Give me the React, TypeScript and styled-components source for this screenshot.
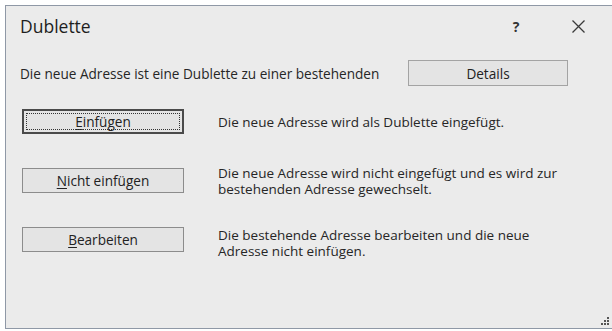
import React from "react";
import styled, { createGlobalStyle } from "styled-components";

const GlobalStyle = createGlobalStyle`
  html, body {
    margin: 0;
    padding: 0;
    background: #ffffff;
  }
  body {
    font-family: "Open Sans", "Noto Sans", "DejaVu Sans", sans-serif;
    color: #262626;
  }
`;

const options = [
  {
    label: "Einfügen",
    key: "E",
    rest: "infügen",
    text: "Die neue Adresse wird als Dublette eingefügt.",
    isDefault: true,
    shift: 0,
  },
  {
    label: "Nicht einfügen",
    key: "N",
    rest: "icht einfügen",
    text: "Die neue Adresse wird nicht eingefügt und es wird zur bestehenden Adresse gewechselt.",
    shift: 1,
  },
  {
    label: "Bearbeiten",
    key: "B",
    rest: "earbeiten",
    text: "Die bestehende Adresse bearbeiten und die neue Adresse nicht einfügen.",
    shift: 7,
  },
];

const App = () => {
  return (
    <>
      <GlobalStyle />
      <Window>
        <TitleBar>
          <Title>Dublette</Title>
          <HelpButton>?</HelpButton>
          <CloseButton aria-label="Schließen">
            <svg width="13" height="13" viewBox="0 0 13 13">
              <path d="M0.5 0.5 L12.5 12.5 M12.5 0.5 L0.5 12.5" stroke="#3a3a3a" strokeWidth="1.3" fill="none" />
            </svg>
          </CloseButton>
        </TitleBar>
        <InfoRow>
          <InfoText>Die neue Adresse ist eine Dublette zu einer bestehenden</InfoText>
          <DetailsButton>Details</DetailsButton>
        </InfoRow>
        <OptionList>
          {options.map((o) => (
            <OptionRow key={o.label}>
              <ActionButton $default={!!o.isDefault}>
                <Caption $focused={!!o.isDefault}>
                  <u>{o.key}</u>
                  {o.rest}
                </Caption>
              </ActionButton>
              <Description $shift={o.shift}>{o.text}</Description>
            </OptionRow>
          ))}
        </OptionList>
        <Grip>
          <svg width="8" height="8" viewBox="0 0 8 8">
            <rect x="6" y="0" width="2" height="2" fill="#555" />
            <rect x="3" y="3" width="2" height="2" fill="#555" />
            <rect x="6" y="3" width="2" height="2" fill="#555" />
            <rect x="0" y="6" width="2" height="2" fill="#555" />
            <rect x="3" y="6" width="2" height="2" fill="#555" />
            <rect x="6" y="6" width="2" height="2" fill="#555" />
          </svg>
        </Grip>
      </Window>
    </>
  );
};

export default App;

const Window = styled.div`
  position: relative;
  box-sizing: border-box;
  margin: 5px 0 0 5px;
  width: 607px;
  height: 324px;
  background: #ebebeb;
  border: 1px solid #8f98a6;
  border-right: none;
  display: flex;
  flex-direction: column;
`;

const TitleBar = styled.div`
  display: flex;
  align-items: center;
  height: 40px;
  padding-left: 14px;
`;

const Title = styled.span`
  font-size: 17.5px;
  color: #1e1e1e;
  flex: 1;
`;

const HelpButton = styled.span`
  font-size: 14px;
  font-weight: 700;
  color: #333;
  width: 20px;
  text-align: center;
  margin-right: 46px;
`;

const CloseButton = styled.span`
  display: flex;
  width: 13px;
  height: 13px;
  margin-right: 27px;
`;

const InfoRow = styled.div`
  display: flex;
  align-items: center;
  margin-top: 14px;
  padding-left: 14px;
  height: 26px;
`;

const InfoText = styled.span`
  font-size: 13.6px;
  flex: 1;
`;

const BaseButton = styled.div`
  box-sizing: border-box;
  display: flex;
  align-items: center;
  justify-content: center;
  height: 26px;
  background: #e4e4e4;
  border: 1px solid #a3a3a3;
  font-size: 13.6px;
  color: #222;
`;

const DetailsButton = styled(BaseButton)`
  width: 160px;
  margin-right: 44px;
`;

const OptionList = styled.div`
  display: flex;
  flex-direction: column;
  gap: 34px;
  padding: 23px 0 0 16px;
`;

const OptionRow = styled.div`
  display: flex;
  align-items: center;
  height: 25px;
  gap: 34px;
`;

const ActionButton = styled(BaseButton)<{ $default: boolean }>`
  flex: none;
  width: 162px;
  height: 25px;
  border: ${(p) => (p.$default ? "2px solid #4a4a4a" : "1px solid #8c8c8c")};
  padding: 2px;
`;

const Caption = styled.span<{ $focused: boolean }>`
  box-sizing: border-box;
  flex: 1;
  align-self: stretch;
  display: flex;
  align-items: center;
  justify-content: center;
  outline: ${(p) => (p.$focused ? "1px dotted #333" : "none")};
  outline-offset: -1px;
  u {
    text-underline-offset: 2px;
  }
`;

const Description = styled.p<{ $shift: number }>`
  margin: ${(p) => p.$shift}px 0 0;
  font-size: 13.5px;
  line-height: 16px;
  max-width: 350px;
`;

const Grip = styled.div`
  position: absolute;
  right: 3px;
  bottom: 3px;
  display: flex;
`;
